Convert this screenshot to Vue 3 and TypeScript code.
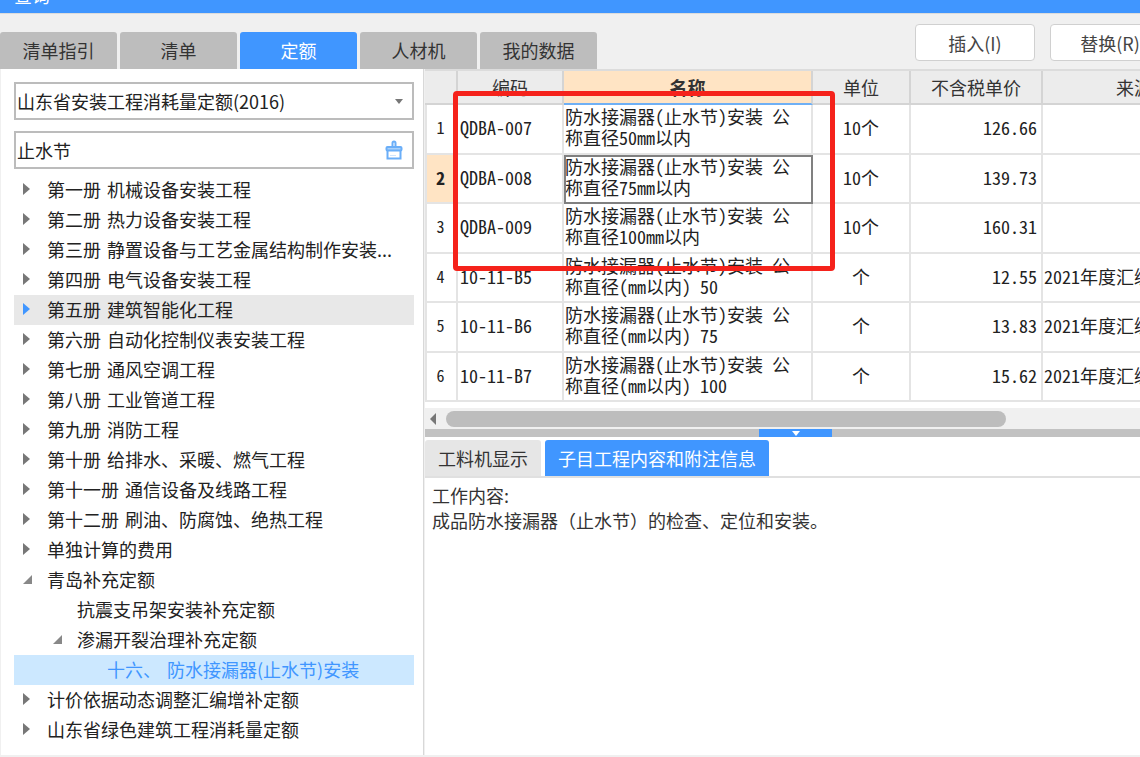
<script setup lang="ts">
interface TreeNode {
  label: string
  indent: number
  arrow?: 'right' | 'down'
  active?: boolean
  selected?: boolean
}

interface QuotaRow {
  no: number
  code: string
  name: string
  unit: string
  price: string
  source: string
}

const tabs = ['清单指引', '清单', '定额', '人材机', '我的数据']

const tree: TreeNode[] = [
  { label: '第一册 机械设备安装工程', indent: 0, arrow: 'right' },
  { label: '第二册 热力设备安装工程', indent: 0, arrow: 'right' },
  { label: '第三册 静置设备与工艺金属结构制作安装...', indent: 0, arrow: 'right' },
  { label: '第四册 电气设备安装工程', indent: 0, arrow: 'right' },
  { label: '第五册 建筑智能化工程', indent: 0, arrow: 'right', active: true },
  { label: '第六册 自动化控制仪表安装工程', indent: 0, arrow: 'right' },
  { label: '第七册 通风空调工程', indent: 0, arrow: 'right' },
  { label: '第八册 工业管道工程', indent: 0, arrow: 'right' },
  { label: '第九册 消防工程', indent: 0, arrow: 'right' },
  { label: '第十册 给排水、采暖、燃气工程', indent: 0, arrow: 'right' },
  { label: '第十一册 通信设备及线路工程', indent: 0, arrow: 'right' },
  { label: '第十二册 刷油、防腐蚀、绝热工程', indent: 0, arrow: 'right' },
  { label: '单独计算的费用', indent: 0, arrow: 'right' },
  { label: '青岛补充定额', indent: 0, arrow: 'down' },
  { label: '抗震支吊架安装补充定额', indent: 1 },
  { label: '渗漏开裂治理补充定额', indent: 1, arrow: 'down' },
  { label: '十六、 防水接漏器(止水节)安装', indent: 2, selected: true },
  { label: '计价依据动态调整汇编增补定额', indent: 0, arrow: 'right' },
  { label: '山东省绿色建筑工程消耗量定额', indent: 0, arrow: 'right' },
]

const rows: QuotaRow[] = [
  { no: 1, code: 'QDBA-007', name: '防水接漏器(止水节)安装 公称直径50mm以内', unit: '10个', price: '126.66', source: '' },
  { no: 2, code: 'QDBA-008', name: '防水接漏器(止水节)安装 公称直径75mm以内', unit: '10个', price: '139.73', source: '' },
  { no: 3, code: 'QDBA-009', name: '防水接漏器(止水节)安装 公称直径100mm以内', unit: '10个', price: '160.31', source: '' },
  { no: 4, code: '10-11-B5', name: '防水接漏器(止水节)安装 公称直径(mm以内) 50', unit: '个', price: '12.55', source: '2021年度汇编' },
  { no: 5, code: '10-11-B6', name: '防水接漏器(止水节)安装 公称直径(mm以内) 75', unit: '个', price: '13.83', source: '2021年度汇编' },
  { no: 6, code: '10-11-B7', name: '防水接漏器(止水节)安装 公称直径(mm以内) 100', unit: '个', price: '15.62', source: '2021年度汇编' },
]
</script>

<template>
  <div class="app">
    <div class="title-bar"><span>查询</span></div>

    <div class="toolbar">
      <div class="tabs">
        <div v-for="tab in tabs" :key="tab" class="tab" :class="{ on: tab === '定额' }">{{ tab }}</div>
      </div>
      <div class="actions">
        <button class="btn">插入(I)</button>
        <button class="btn">替换(R)</button>
      </div>
    </div>

    <div class="body">
      <aside class="side">
        <div class="field select">
          <span>山东省安装工程消耗量定额(2016)</span>
          <i class="caret"></i>
        </div>
        <div class="field search">
          <span>止水节</span>
          <svg width="18" height="20" viewBox="0 0 18 20" fill="none" stroke="#6aaef8" stroke-width="2">
            <path d="M7.5 7V3a1.500 1.500 0 0 1 3 0v4" />
            <rect x="1.500" y="7" width="15" height="3.500" rx="1" fill="#a9d1fa" />
            <path d="M2.500 10.500V18.500H15.500V10.500" />
            <path d="M5 15.500h6" stroke="#cfe5fd" stroke-width="1" />
          </svg>
        </div>
        <ul class="tree">
          <li
            v-for="node in tree"
            :key="node.label"
            class="node"
            :class="{ active: node.active, selected: node.selected, ['lv' + node.indent]: true }"
          >
            <i v-if="node.arrow" class="arrow" :class="node.arrow"></i>
            <span class="node-label">{{ node.label }}</span>
          </li>
        </ul>
      </aside>

      <main class="main">
        <div class="grid">
          <div class="grid-row head">
            <div class="cell"></div>
            <div class="cell">编码</div>
            <div class="cell picked">名称</div>
            <div class="cell">单位</div>
            <div class="cell">不含税单价</div>
            <div class="cell">来源</div>
          </div>
          <div v-for="row in rows" :key="row.no" class="grid-row item">
            <div class="cell no" :class="{ current: row.no === 2 }">{{ row.no }}</div>
            <div class="cell code">{{ row.code }}</div>
            <div class="cell name" :class="{ focus: row.no === 2 }">{{ row.name }}</div>
            <div class="cell unit">{{ row.unit }}</div>
            <div class="cell price">{{ row.price }}</div>
            <div class="cell source">{{ row.source }}</div>
          </div>
        </div>

        <div class="scrollbar">
          <i class="scroll-left"></i>
          <div class="thumb"></div>
        </div>
        <div class="splitter">
          <div class="grip"><i></i></div>
        </div>

        <div class="sub-tabs">
          <div class="sub-tab">工料机显示</div>
          <div class="sub-tab on">子目工程内容和附注信息</div>
        </div>
        <div class="notes">
          <p>工作内容:</p>
          <p>成品防水接漏器（止水节）的检查、定位和安装。</p>
        </div>
      </main>
    </div>

    <div class="mark"></div>
  </div>
</template>

<style>
html,
body {
  margin: 0;
  overflow: hidden;
}
</style>

<style scoped>
.app {
  position: relative;
  width: 1140px;
  height: 757px;
  overflow: hidden;
  display: flex;
  flex-direction: column;
  background: #f0f0f0;
  color: #333;
  font-family: "Noto Sans CJK SC", "Liberation Sans", sans-serif;
  font-size: 18px;
}

.title-bar {
  height: 13px;
  flex: none;
  overflow: hidden;
  background: #4096ff;
  border-bottom: 1px solid #dcdcdc;
  color: #fff;
  padding-left: 14px;
}

.title-bar span {
  display: block;
  margin-top: -18px;
  line-height: 26px;
}

.toolbar {
  height: 55px;
  flex: none;
  display: flex;
  justify-content: space-between;
  align-items: flex-end;
}

.tabs {
  display: flex;
  gap: 3px;
}

.tab {
  width: 117px;
  height: 37px;
  line-height: 37px;
  text-align: center;
  background: #bdbdbd;
  border-radius: 3px 3px 0 0;
}

.tab.on {
  background: #4096ff;
  color: #fff;
}

.actions {
  display: flex;
  gap: 15px;
  align-self: flex-start;
  margin-top: 10px;
  margin-right: -30px;
}

.btn {
  width: 120px;
  height: 37px;
  padding: 0;
  background: #fff;
  border: 1px solid #d0d0d0;
  border-radius: 4px;
  font: inherit;
  color: #444;
}

.body {
  flex: 1;
  min-height: 0;
  display: flex;
  padding-bottom: 2px;
  gap: 1px;
  padding-left: 1px;
}

.side {
  flex: none;
  background: #fff;
  border-right: 1px solid #d8d8d8;
  padding: 13px 9px 0 13px;
  box-sizing: border-box;
  width: 423px;
}

.field {
  height: 38px;
  box-sizing: border-box;
  border: 2px solid #bcbcbc;
  display: flex;
  align-items: center;
  justify-content: space-between;
  padding: 0 9px 0 1px;
  color: #222;
}

.search {
  margin-top: 11px;
}

.caret {
  width: 0;
  height: 0;
  border: 4px solid transparent;
  border-top: 5px solid #777;
  border-bottom: 0;
}

.tree {
  list-style: none;
  margin: 6px 0 0;
  padding: 0;
}

.node {
  position: relative;
  height: 30px;
  line-height: 28px;
  color: #222;
  white-space: nowrap;
  word-spacing: 2px;
  display: flex;
}

.lv0 {
  padding-left: 33px;
}

.lv1 {
  padding-left: 63px;
}

.lv2 {
  padding-left: 93px;
}

.node.active {
  background: #e8e8e8;
}

.node.selected {
  background: #cce8ff;
  color: #4096ff;
}

.arrow {
  position: absolute;
  top: 8px;
  left: 9px;
  width: 0;
  height: 0;
}

.arrow.right {
  border-left: 7px solid #777;
  border-top: 6px solid transparent;
  border-bottom: 6px solid transparent;
}

.active .arrow.right {
  border-left-color: #4096ff;
}

.arrow.down {
  top: 10px;
  border-bottom: 9px solid #888;
  border-left: 9px solid transparent;
}

.lv1 .arrow.down {
  left: 39px;
}

.main {
  flex: 1;
  min-width: 0;
  background: #fff;
  display: flex;
  flex-direction: column;
}

.grid {
  flex: none;
  height: 334px;
  overflow: hidden;
  border-top: 2px solid #dcdcdc;
  box-sizing: border-box;
}

.grid-row {
  display: grid;
  grid-template-columns: 33px 106px 249px 98px 132px 184px;
}

.cell {
  box-sizing: border-box;
  border-right: 2px solid #e4e4e4;
  border-bottom: 2px solid #e4e4e4;
}

.head .cell {
  height: 34px;
  line-height: 32px;
  text-align: center;
  background: #ececec;
  border-right-color: #d4d4d4;
  border-bottom-color: #d4d4d4;
  color: #333;
  overflow: hidden;
}

.head .picked {
  background: #ffe4c4;
  font-weight: 700;
  border-bottom-color: #6fb0f5;
}

.item .cell {
  height: 49.500px;
  display: flex;
  align-items: center;
  padding-bottom: 3px;
  color: #222;
  font-family: "Noto Sans Mono CJK SC", "Noto Sans CJK SC", monospace;
}

.item .no {
  justify-content: center;
  padding-right: 2px;
  background: #fff;
  border-left: 2px solid #e4e4e4;
  font-size: 16px;
}

.item .no.current {
  background: #ffe4c4;
  font-weight: 700;
  font-size: 18px;
}

.item .code {
  padding-left: 2px;
}

.item .name {
  padding: 0 20px 3px 1px;
  line-height: 21px;
  word-break: break-all;
}

.item .name.focus {
  outline: 2px solid #808080;
  outline-offset: -2px;
}

.item .unit {
  justify-content: center;
}

.item .price {
  justify-content: flex-end;
  padding-right: 4px;
}

.item .source {
  padding-left: 1px;
  white-space: nowrap;
}

.scrollbar {
  height: 26px;
  flex: none;
  background: #f0f0f0;
  border-top: 5px solid #fff;
  box-sizing: border-box;
  display: flex;
  align-items: center;
}

.scroll-left {
  width: 0;
  height: 0;
  margin-left: 5px;
  border-right: 6px solid #777;
  border-top: 6px solid transparent;
  border-bottom: 6px solid transparent;
}

.thumb {
  width: 560px;
  height: 16px;
  margin-left: 10px;
  background: #bdbdbd;
  border-radius: 8px;
}

.splitter {
  height: 8px;
  flex: none;
  background: #c2c2c2;
  display: flex;
  padding-left: 334px;
}

.grip {
  width: 73px;
  background: #4096ff;
  display: flex;
  justify-content: center;
  padding-top: 2px;
  box-sizing: border-box;
}

.grip i {
  width: 0;
  height: 0;
  border: 4px solid transparent;
  border-top: 5px solid #fff;
  border-bottom: 0;
}

.sub-tabs {
  display: flex;
  flex: none;
  gap: 4px;
  padding-top: 3px;
  border-bottom: 2px solid #e0e0e0;
}

.sub-tab {
  height: 36px;
  line-height: 36px;
  padding: 0 13px;
  background: #e6e6e6;
  border-radius: 3px 3px 0 0;
}

.sub-tab.on {
  background: #4096ff;
  color: #fff;
}

.notes {
  padding: 5px 7px;
  line-height: 25px;
  color: #333;
}

.notes p {
  margin: 0;
}

.mark {
  position: absolute;
  left: 453px;
  top: 91px;
  width: 382px;
  height: 180px;
  box-sizing: border-box;
  border: 5px solid #f5221b;
  border-radius: 4px;
}
</style>
